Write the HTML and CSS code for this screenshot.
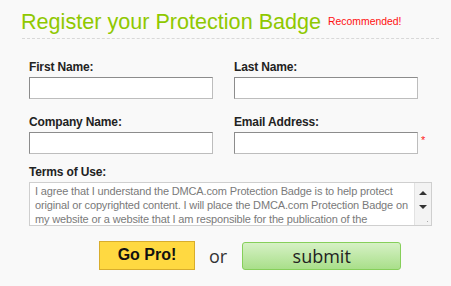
FILE: index.html
```html
<!DOCTYPE html>
<html>
<head>
<meta charset="utf-8">
<link rel="stylesheet" href="styles.css">
</head>
<body>
<div class="page">
  <div class="head">
    <h1 class="title">Register your Protection Badge</h1>
    <span class="rec">Recommended!</span>
  </div>
  <div class="grid">
    <div class="field">
      <label class="lbl">First Name:</label>
      <input class="inp" type="text">
    </div>
    <div class="field">
      <label class="lbl">Last Name:</label>
      <input class="inp" type="text">
    </div>
    <div class="field row2">
      <label class="lbl">Company Name:</label>
      <input class="inp" type="text">
    </div>
    <div class="field row2">
      <label class="lbl">Email Address:</label>
      <div class="req-row">
        <input class="inp" type="text">
        <span class="star">*</span>
      </div>
    </div>
  </div>
  <div class="terms">
    <label class="lbl">Terms of Use:</label>
    <div class="tbox">
      <div class="ttext">I agree that I understand the DMCA.com Protection Badge is to help protect<br>original or copyrighted content. I will place the DMCA.com Protection Badge on<br>my website or a website that I am responsible for the publication of the<br>content. I understand that the badge does not guarantee protection.</div>
      <div class="sbar">
        <span class="arr up"></span>
        <span class="arr down"></span>
        <span class="grip"></span>
      </div>
    </div>
  </div>
  <div class="actions">
    <button class="pro">Go Pro!</button>
    <span class="or">or</span>
    <button class="submit">submit</button>
  </div>
</div>
</body>
</html>
```
FILE: styles.css
```css
html, body {
  margin: 0;
  padding: 0;
  background: #f9f9f9;
}
.page {
  width: 451px;
  height: 286px;
  font-family: "Liberation Sans", Arial, sans-serif;
  box-sizing: border-box;
  padding-top: 9px;
}
.head {
  display: flex;
  align-items: baseline;
  margin-left: 22px;
  width: 417px;
  padding-bottom: 3px;
  border-bottom: 1px dashed #d8d8d8;
}
.title {
  margin: 0 0 0 -1px;
  font-size: 21.6px;
  line-height: 26px;
  font-weight: normal;
  color: #8fc800;
  white-space: nowrap;
}
.rec {
  font-size: 10.4px;
  color: #ff1010;
  margin-left: 7px;
  position: relative;
  top: -4px;
  white-space: nowrap;
}
.grid {
  display: grid;
  grid-template-columns: 184px 184px;
  column-gap: 21px;
  margin-left: 29px;
  margin-top: 21px;
}
.field {
  display: flex;
  flex-direction: column;
}
.row2 {
  margin-top: 16px;
}
.lbl {
  display: block;
  font-size: 12px;
  line-height: 14px;
  font-weight: bold;
  color: #222;
  margin-bottom: 3px;
  letter-spacing: -0.15px;
}
.inp {
  box-sizing: border-box;
  width: 184px;
  height: 22px;
  margin: 0;
  background: #fff;
  border: 1px solid;
  border-color: #8c8c8c #bdbdbd #bdbdbd #8c8c8c;
  padding: 0;
  flex-shrink: 0;
}
.req-row {
  display: flex;
  align-items: flex-start;
}
.star {
  color: #ff2020;
  font-size: 11px;
  margin-left: 3px;
  margin-top: 2px;
}
.terms {
  margin-left: 29px;
  margin-top: 11px;
}
.tbox {
  box-sizing: border-box;
  width: 403px;
  height: 44px;
  border: 1px solid #cfcfcf;
  background: #fff;
  display: flex;
}
.ttext {
  flex: 1;
  overflow: hidden;
  white-space: nowrap;
  padding: 1px 2px 0 5px;
  font-size: 11px;
  letter-spacing: -0.15px;
  line-height: 14px;
  color: #7a7a7a;
}
.sbar {
  width: 16px;
  flex-shrink: 0;
  background: #f3f3f3;
  border-left: 1px solid #e2e2e2;
  position: relative;
}
.arr {
  position: absolute;
  left: 4px;
  width: 0;
  height: 0;
  border-left: 4px solid transparent;
  border-right: 4px solid transparent;
}
.up {
  top: 8px;
  border-bottom: 4px solid #333;
}
.down {
  top: 22px;
  border-top: 4px solid #333;
}
.grip {
  position: absolute;
  right: 1px;
  bottom: 1px;
  width: 7px;
  height: 7px;
  background:
    radial-gradient(circle, #aaa 0.6px, transparent 0.9px) 0 0 / 3px 3px;
  clip-path: polygon(100% 0, 100% 100%, 0 100%);
}
.actions {
  display: flex;
  align-items: center;
  margin-top: 14px;
  margin-left: 99px;
}
.pro {
  box-sizing: border-box;
  width: 96px;
  height: 29px;
  margin: 0;
  background: #ffd941;
  border: 1px solid #d8ad2c;
  font-family: "Liberation Sans", Arial, sans-serif;
  font-weight: bold;
  font-size: 16px;
  color: #111;
  padding: 0;
}
.or {
  font-family: "Open Sans", sans-serif;
  font-size: 18px;
  color: #333;
  margin-left: 14px;
  margin-right: 15px;
  position: relative;
  top: 1px;
}
.submit {
  box-sizing: border-box;
  width: 159px;
  height: 28px;
  margin: 2px 0 0 0;
  padding: 0;
  border: 1px solid #86cf5a;
  border-radius: 3px;
  background: linear-gradient(#d6f1c5, #a9df8a);
  font-family: "Open Sans", sans-serif;
  font-size: 18px;
  color: #222;
  line-height: 24px;
}
```
